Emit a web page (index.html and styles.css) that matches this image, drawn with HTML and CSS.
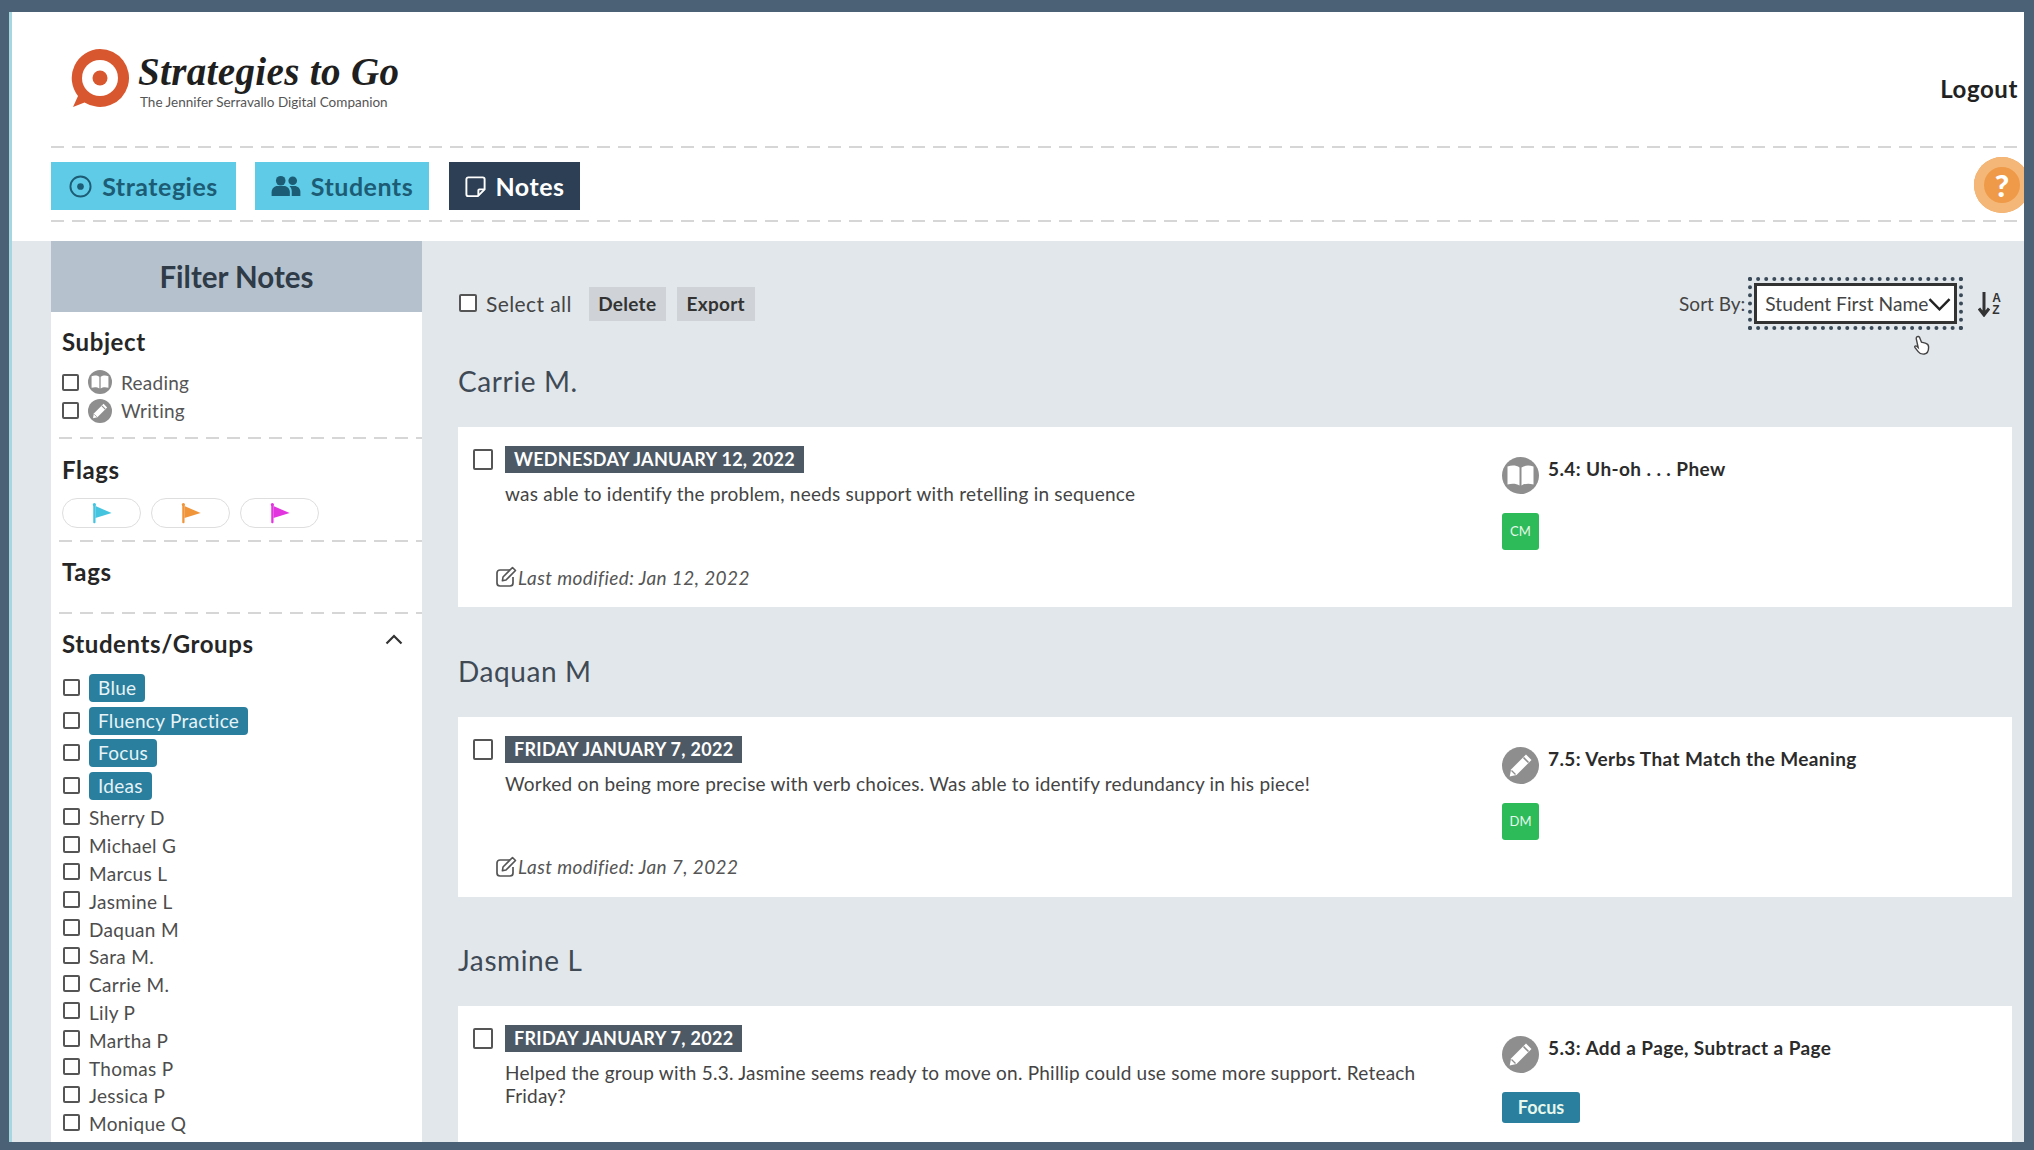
FILE: index.html
```html
<!DOCTYPE html>
<html lang="en">
<head>
<meta charset="utf-8">
<title>Strategies to Go - Notes</title>
<link rel="stylesheet" href="styles.css">
</head>
<body>
<svg class="defs" width="0" height="0" aria-hidden="true">
  <symbol id="book" viewBox="0 0 37 37">
    <circle cx="18.5" cy="18.5" r="18.5" fill="#8e8e8e"/>
    <path d="M5.5 9.5c4.500-1.500 9-1.200 12 1v18c-3-2-7.500-2.400-12-1z" fill="#fff"/>
    <path d="M31.500 9.500c-4.500-1.500-9-1.200-12 1v18c3-2 7.500-2.400 12-1z" fill="#fff"/>
  </symbol>
  <symbol id="pencil" viewBox="0 0 37 37">
    <circle cx="18.5" cy="18.5" r="18.5" fill="#8e8e8e"/>
    <path d="M24 7.500l5.500 5.500-15 15-6.800 1.600 1.300-7.100z" fill="#fff"/>
    <path d="M21.500 10.500l5 5" stroke="#8e8e8e" stroke-width="1.600"/>
    <path d="M9.500 23.500l4 4" stroke="#8e8e8e" stroke-width="1.200"/>
  </symbol>
  <symbol id="edit" viewBox="0 0 22 22">
    <path d="M15 4H5a3 3 0 0 0-3 3v10a3 3 0 0 0 3 3h10a3 3 0 0 0 3-3v-6" fill="none" stroke="#555" stroke-width="1.700"/>
    <path d="M8 11L17.500 1.500l3 3L11 14l-3.600.8z" fill="none" stroke="#555" stroke-width="1.600" stroke-linejoin="round"/>
  </symbol>
  <symbol id="flag" viewBox="0 0 24 24">
    <rect x="2" y="1" width="2.600" height="22" rx="1"/>
    <circle cx="3.300" cy="1.800" r="1.800"/>
    <path d="M4.500 3.500L23 11.500 4.500 17z"/>
  </symbol>
</svg>

<div class="frame">
  <header class="top">
    <div class="logo">
      <svg class="logo-mark" viewBox="0 0 60 62" aria-hidden="true">
        <path d="M30 1a29 29 0 1 1-15.500 53.500L3 59l5-11A29 29 0 0 1 30 1z" fill="#d9572f"/>
        <circle cx="30" cy="30" r="18" fill="#fff"/>
        <circle cx="30" cy="30" r="7.500" fill="#d9572f"/>
      </svg>
      <div class="logo-text">
        <div class="logo-title">Strategies to Go</div>
        <div class="logo-sub">The Jennifer Serravallo Digital Companion</div>
      </div>
    </div>
    <a class="logout">Logout</a>
  </header>
  <div class="dash top-dash"></div>
  <nav class="nav">
    <a class="tab">
      <svg class="tab-icon" viewBox="0 0 24 24" aria-hidden="true"><circle cx="12" cy="12" r="10.500" fill="none" stroke="#1d5c75" stroke-width="2"/><circle cx="12" cy="12" r="3.500" fill="#1d5c75"/></svg>
      Strategies
    </a>
    <a class="tab">
      <svg class="tab-icon wide" viewBox="0 0 30 24" aria-hidden="true"><g fill="#1d5c75"><circle cx="9.500" cy="6" r="5"/><circle cx="22" cy="6" r="4.500"/><path d="M0 22v-4c0-4 3-6.500 6-6.500h7c3 0 6 2.500 6 6.500v4z"/><path d="M21 22v-5c0-2-.8-4-2.300-5.500h5.300c3 0 6 2.500 6 6v4.500z"/></g></svg>
      Students
    </a>
    <a class="tab active">
      <svg class="tab-icon" viewBox="0 0 24 24" aria-hidden="true"><path d="M4.500 2.500h15a2 2 0 0 1 2 2V15l-7 7h-10a2 2 0 0 1-2-2V4.500a2 2 0 0 1 2-2z" fill="none" stroke="#fff" stroke-width="2"/><path d="M15 21.500V16a1 1 0 0 1 1-1h5" fill="none" stroke="#fff" stroke-width="2"/></svg>
      Notes
    </a>
  </nav>
  <div class="dash top-dash"></div>
  <button class="help">?</button>

  <div class="content">
    <aside class="filter">
      <h2 class="filter-head">Filter Notes</h2>
      <h3 class="f-title subject">Subject</h3>
      <label class="sub-row"><input type="checkbox" class="cb"><svg class="sub-icon"><use href="#book"/></svg>Reading</label>
      <label class="sub-row"><input type="checkbox" class="cb"><svg class="sub-icon"><use href="#pencil"/></svg>Writing</label>
      <div class="dash side-dash d1"></div>
      <h3 class="f-title flags-t">Flags</h3>
      <div class="flags">
        <span class="pill"><svg class="flag blue"><use href="#flag"/></svg></span>
        <span class="pill"><svg class="flag orange"><use href="#flag"/></svg></span>
        <span class="pill"><svg class="flag pink"><use href="#flag"/></svg></span>
      </div>
      <div class="dash side-dash d2"></div>
      <h3 class="f-title tags-t">Tags</h3>
      <div class="dash side-dash d3"></div>
      <div class="sg-head">
        <h3 class="f-title">Students/Groups</h3>
        <svg class="chev" viewBox="0 0 18 11" aria-hidden="true"><path d="M1.500 9.500L9 2l7.500 7.500" fill="none" stroke="#333" stroke-width="2.200"/></svg>
      </div>
      <ul class="groups">
        <li><input type="checkbox" class="cb"><span class="chip">Blue</span></li>
        <li><input type="checkbox" class="cb"><span class="chip">Fluency Practice</span></li>
        <li><input type="checkbox" class="cb"><span class="chip">Focus</span></li>
        <li><input type="checkbox" class="cb"><span class="chip">Ideas</span></li>
      </ul>
      <ul class="names">
        <li><input type="checkbox" class="cb">Sherry D</li>
        <li><input type="checkbox" class="cb">Michael G</li>
        <li><input type="checkbox" class="cb">Marcus L</li>
        <li><input type="checkbox" class="cb">Jasmine L</li>
        <li><input type="checkbox" class="cb">Daquan M</li>
        <li><input type="checkbox" class="cb">Sara M.</li>
        <li><input type="checkbox" class="cb">Carrie M.</li>
        <li><input type="checkbox" class="cb">Lily P</li>
        <li><input type="checkbox" class="cb">Martha P</li>
        <li><input type="checkbox" class="cb">Thomas P</li>
        <li><input type="checkbox" class="cb">Jessica P</li>
        <li><input type="checkbox" class="cb">Monique Q</li>
      </ul>
    </aside>

    <main class="main">
      <div class="toolbar">
        <label class="select-all"><input type="checkbox" class="cb big">Select all</label>
        <button class="tool">Delete</button>
        <button class="tool">Export</button>
        <div class="sort">
          <span class="sort-label">Sort By:</span>
          <div class="focus-ring">
            <div class="select">
              <span class="select-text">Student First Name</span>
              <svg class="select-chev" viewBox="0 0 24 14" aria-hidden="true"><path d="M1.500 2L12 12.500 22.500 2" fill="none" stroke="#222" stroke-width="2.600"/></svg>
            </div>
          </div>
          <div class="az">
            <svg class="az-arrow" viewBox="0 0 12 26" aria-hidden="true"><path d="M6 1v22M1 17.500L6 24l5-6.500" fill="none" stroke="#333" stroke-width="3"/></svg>
            <span class="az-letters"><span>A</span><span>Z</span></span>
          </div>
        </div>
      </div>

      <section class="group">
        <h2 class="student">Carrie M.</h2>
        <article class="card">
          <div class="card-left">
            <div class="date-row"><input type="checkbox" class="cb note-cb"><span class="date">WEDNESDAY JANUARY 12, 2022</span></div>
            <p class="note">was able to identify the problem, needs support with retelling in sequence</p>
            <div class="mod"><svg class="edit"><use href="#edit"/></svg>Last modified: Jan 12, 2022</div>
          </div>
          <div class="card-right">
            <div class="strategy"><svg class="s-icon"><use href="#book"/></svg><span>5.4: Uh-oh . . . Phew</span></div>
            <span class="badge">CM</span>
          </div>
        </article>
      </section>

      <section class="group">
        <h2 class="student">Daquan M</h2>
        <article class="card">
          <div class="card-left">
            <div class="date-row"><input type="checkbox" class="cb note-cb"><span class="date">FRIDAY JANUARY 7, 2022</span></div>
            <p class="note">Worked on being more precise with verb choices. Was able to identify redundancy in his piece!</p>
            <div class="mod"><svg class="edit"><use href="#edit"/></svg>Last modified: Jan 7, 2022</div>
          </div>
          <div class="card-right">
            <div class="strategy"><svg class="s-icon"><use href="#pencil"/></svg><span>7.5: Verbs That Match the Meaning</span></div>
            <span class="badge">DM</span>
          </div>
        </article>
      </section>

      <section class="group">
        <h2 class="student">Jasmine L</h2>
        <article class="card">
          <div class="card-left">
            <div class="date-row"><input type="checkbox" class="cb note-cb"><span class="date">FRIDAY JANUARY 7, 2022</span></div>
            <p class="note">Helped the group with 5.3. Jasmine seems ready to move on. Phillip could use some more support. Reteach Friday?</p>
          </div>
          <div class="card-right">
            <div class="strategy"><svg class="s-icon"><use href="#pencil"/></svg><span>5.3: Add a Page, Subtract a Page</span></div>
            <span class="badge group-badge">Focus</span>
          </div>
        </article>
      </section>
    </main>
  </div>

  <svg class="cursor" viewBox="0 0 20 22" aria-hidden="true"><path d="M5 2c1-1 2.500-.5 3 .5l2 5 4 1c2 .5 3.500 1.500 3.500 4 0 3-1 7-4.500 7.500-3 .4-5-.5-6.500-2.500L3 13c-.6-1 .8-2.200 2-1.200l1.500 1.300L4.500 4C4.300 3.200 4.500 2.500 5 2z" fill="#fff" stroke="#444" stroke-width="1.500"/></svg>
</div>
</body>
</html>
```
FILE: styles.css
```css
* { box-sizing: border-box; }
html, body { margin: 0; height: 100%; }
body {
  background: #4a6176;
  padding: 12px 10px 8px 9px;
  overflow: hidden;
  font-family: "Lato", "Open Sans", sans-serif;
  color: #444;
}
.defs { position: absolute; }
h2, h3, p, ul { margin: 0; padding: 0; }
ul { list-style: none; }
button { font-family: inherit; border: 0; }

.frame {
  position: relative;
  height: 1130px;
  background: #fff;
  border-left: 3px solid #a6d6df;
  overflow: hidden;
}

.top {
  height: 134px;
  margin-left: 39px;
  padding-right: 6px;
  display: flex;
  justify-content: space-between;
  align-items: flex-start;
}
.logo { display: flex; margin: 36px 0 0 19px; }
.logo-mark { width: 60px; height: 62px; }
.logo-text { margin-left: 8px; }
.logo-title {
  font-family: "Liberation Serif", serif;
  font-style: italic;
  font-weight: 700;
  font-size: 39px;
  line-height: 40px;
  color: #1f1f1f;
  margin-top: 4px;
  letter-spacing: .35px;
}
.logo-sub {
  font-size: 13.500px;
  line-height: 18px;
  color: #555;
  margin: 1px 0 0 2px;
}
.logout {
  margin-top: 63px;
  font-size: 24px;
  line-height: 28px;
  font-weight: 700;
  letter-spacing: .6px;
  color: #222;
}

.dash {
  height: 2px;
  background: repeating-linear-gradient(90deg, #d6d6d6 0 13px, transparent 13px 21px);
}
.top-dash { margin-left: 39px; }

.nav { display: flex; gap: 19px; height: 72px; padding: 14px 0 0 39px; }
.tab {
  height: 48px;
  display: flex;
  align-items: center;
  justify-content: center;
  gap: 10px;
  padding: 0 14px;
  background: #5fcbe6;
  color: #1d5c75;
  font-size: 25px;
  letter-spacing: .5px;
  font-weight: 700;
}
.tab:nth-child(1) { width: 185px; }
.tab:nth-child(2) { width: 174px; }
.tab.active { width: 131px; margin-left: 1px; gap: 8px; background: #2d3f54; color: #fff; }
.tab-icon { width: 23px; height: 23px; flex: none; }
.tab-icon.wide { width: 30px; }

.help {
  position: absolute;
  right: -6px;
  top: 145px;
  width: 56px;
  height: 56px;
  border-radius: 50%;
  background: #ef9a48;
  box-shadow: inset 0 0 0 10px #f5b778;
  color: #fff;
  font-size: 31px;
  font-weight: 900;
  padding: 0;
}

.content {
  margin-top: 19px;
  height: 901px;
  display: flex;
  background: #e2e7ec;
  padding-left: 39px;
}

.filter { width: 371px; flex: none; background: #fff; padding: 0 0 0 11px; }
.filter-head {
  margin-left: -11px;
  height: 71px;
  background: #b5c2ce;
  color: #2f3b47;
  font-size: 29.500px;
  font-weight: 700;
  line-height: 71px;
  text-align: center;
}
.f-title { font-size: 24px; line-height: 30px; font-weight: 700; letter-spacing: .6px; color: #262626; }
.subject { margin-top: 15px; }
.cb {
  appearance: none;
  -webkit-appearance: none;
  width: 17px;
  height: 17px;
  margin: 0;
  flex: none;
  background: #fff;
  border: 2px solid #555;
  border-radius: 2px;
}
.sub-row {
  height: 28.500px;
  display: flex;
  align-items: center;
  font-size: 19px;
  letter-spacing: .25px;
  color: #555;
}
.sub-row:first-of-type { margin-top: 11px; }
.sub-icon { width: 24px; height: 24px; margin: 0 9px; }
.side-dash { margin-left: -3px; }
.d1 { margin-top: 12px; }
.flags-t { margin-top: 16px; }
.flags { display: flex; gap: 10px; margin-top: 13px; }
.pill {
  width: 79px;
  height: 30px;
  border: 1px solid #dedede;
  border-radius: 15px;
  display: flex;
  align-items: center;
  justify-content: center;
}
.flag { width: 24px; height: 21px; }
.flag.blue { fill: #45c4e0; }
.flag.orange { fill: #f0953a; }
.flag.pink { fill: #e235df; }
.d2 { margin-top: 12px; }
.tags-t { margin-top: 15px; }
.d3 { margin-top: 25px; }
.sg-head { display: flex; justify-content: space-between; align-items: center; margin-top: 15px; padding-right: 19px; }
.chev { width: 18px; height: 11px; margin-top: -10px; }
.groups { margin-top: 15px; }
.groups li { height: 32.500px; display: flex; align-items: flex-start; padding-left: 1px; }
.groups .cb { margin-top: 5px; }
.chip {
  margin-left: 9px;
  height: 28px;
  padding: 0 9px;
  background: #2a7f9e;
  border-radius: 4px;
  color: #e6f3f7;
  font-size: 19px;
  letter-spacing: .3px;
  line-height: 28px;
}
.names { margin-top: 0; }
.names li {
  height: 27.800px;
  display: flex;
  align-items: center;
  padding-left: 1px;
  font-size: 19px;
  letter-spacing: .3px;
  color: #4d4d4d;
}
.names .cb { margin: -3px 9px 0 0; }

.main { flex: 1; padding: 36px 12px 0 36px; min-width: 0; }
.toolbar { display: flex; align-items: center; height: 53px; margin-bottom: 27px; }
.select-all { display: flex; align-items: center; font-size: 21px; letter-spacing: .4px; color: #444; margin-top: -1px; }
.cb.big { width: 18px; height: 18px; margin-right: 9px; margin-left: 1px; }
.tool {
  height: 34px;
  width: 77px;
  margin-left: 17px;
  background: #cfd3d7;
  color: #333;
  font-size: 19px;
  letter-spacing: .3px;
  font-weight: 700;
  padding: 0;
}
.tool + .tool { margin-left: 11px; width: 78px; }
.sort { margin-left: auto; display: flex; align-items: center; margin-right: 11px; }
.sort-label { font-size: 19px; color: #444; margin-right: 3px; }
.focus-ring {
  width: 215px;
  height: 53px;
  padding: 2px;
  border: 4px dotted #3a4a58;
}
.select {
  height: 41px;
  display: flex;
  align-items: center;
  background: #fff;
  border: 3px solid #333;
  padding-left: 8px;
}
.select-text { flex: none; white-space: nowrap; font-size: 19.200px; color: #444; }
.select-chev { width: 23px; height: 14px; flex: none; }
.az { display: flex; align-items: center; margin-left: 15px; }
.az-arrow { width: 12px; height: 26px; }
.az-letters {
  display: flex;
  flex-direction: column;
  font-family: "Liberation Sans", sans-serif;
  font-size: 12px;
  line-height: 12px;
  font-weight: 700;
  color: #333;
  margin-left: 2px;
}

.group { margin-bottom: 39.500px; }
.student {
  height: 50px;
  margin-bottom: 20px;
  font-size: 28px;
  letter-spacing: .6px;
  line-height: 48px;
  font-weight: 400;
  color: #3f4a55;
}
.card {
  min-height: 180px;
  background: #fff;
  display: flex;
  padding: 19px 0 0 15px;
}
.card-left { width: 1029px; flex: none; display: flex; flex-direction: column; }
.date-row { display: flex; align-items: center; height: 27px; }
.note-cb { width: 20px; height: 21px; margin-right: 12px; }
.date {
  height: 27px;
  padding: 0 9px;
  background: #4d5965;
  color: #fff;
  font-size: 18px;
  letter-spacing: .3px;
  line-height: 27px;
  font-weight: 700;
}
.note {
  margin: 9px 0 0 32px;
  width: 925px;
  font-size: 19px;
  letter-spacing: .22px;
  line-height: 23px;
  color: #444;
}
.mod {
  margin: auto 0 18px 22px;
  display: flex;
  align-items: center;
  height: 24px;
  font-size: 19px;
  letter-spacing: .4px;
  font-style: italic;
  color: #555;
}
.edit { width: 22px; height: 22px; margin-right: 1px; }
.card-right { padding-top: 11px; display: flex; flex-direction: column; align-items: flex-start; }
.strategy {
  display: flex;
  font-size: 19px;
  letter-spacing: .4px;
  font-weight: 700;
  color: #2b2b2b;
  line-height: 24px;
}
.s-icon { width: 37px; height: 37px; margin-right: 9px; flex: none; }
.badge {
  margin-top: 19px;
  width: 37px;
  height: 37px;
  background: #2dbb5a;
  border-radius: 3px;
  color: #e6f7ec;
  font-size: 13px;
  line-height: 37px;
  text-align: center;
}
.group-badge {
  width: 78px;
  height: 31px;
  background: #2a7f9e;
  font-size: 18px;
  font-weight: 700;
  line-height: 31px;
}

.cursor { position: absolute; left: 1900px; top: 323px; width: 19px; height: 21px; }
```
